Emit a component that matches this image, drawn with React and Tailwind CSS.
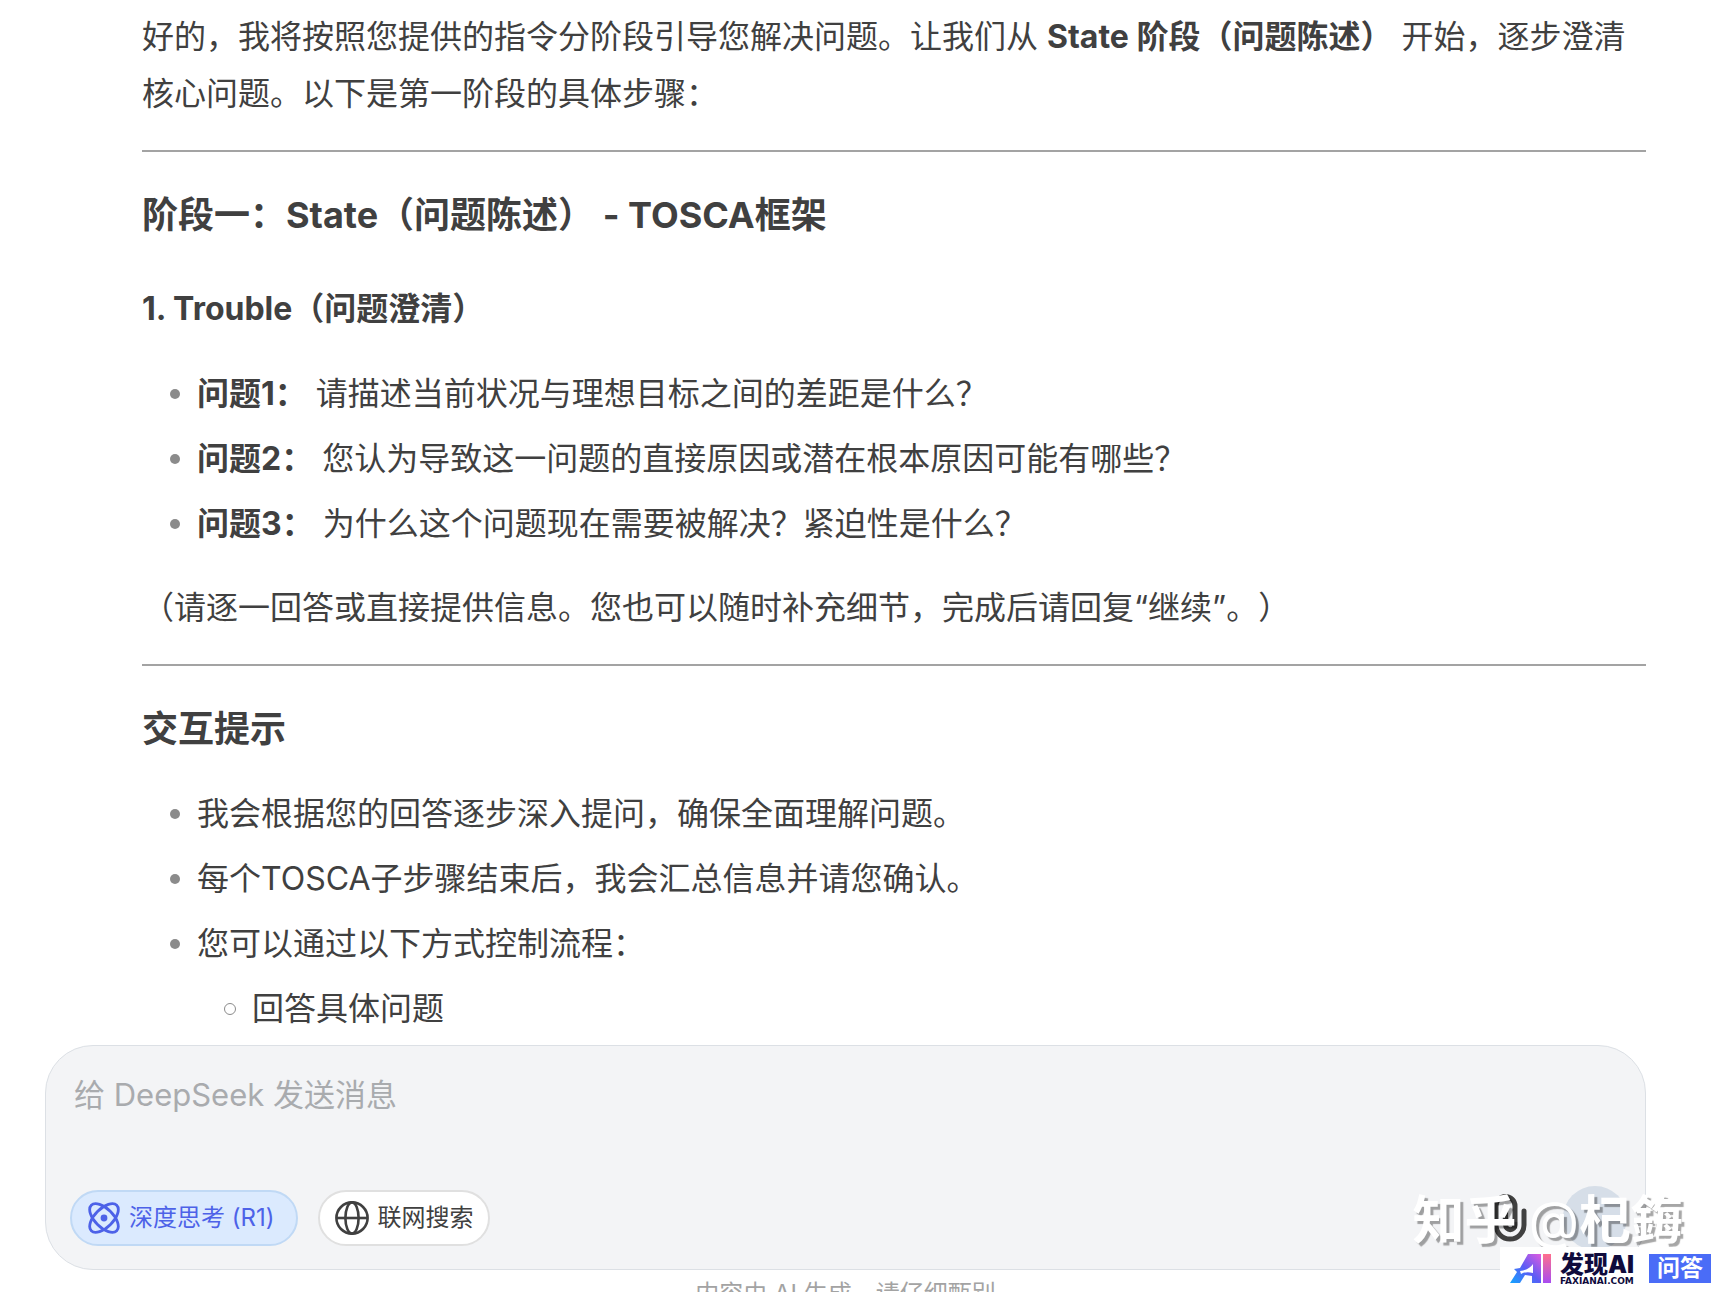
const rule = "h-[2px] border-0 bg-[#a3a3a3]";

function Dot() {
  return <span className="mr-[17px] size-[10px] shrink-0 rounded-full bg-[#8b8b8b]" />;
}

function Item({ children }) {
  return (
    <li className="flex items-center">
      <Dot />
      <span>{children}</span>
    </li>
  );
}

function AtomIcon() {
  return (
    <svg viewBox="0 0 34 34" className="size-[34px]" fill="none" stroke="#4d62e8" strokeWidth="2.8" aria-hidden="true">
      <ellipse cx="17" cy="17" rx="18" ry="9.2" transform="rotate(45 17 17)" />
      <ellipse cx="17" cy="17" rx="18" ry="9.2" transform="rotate(-45 17 17)" />
      <circle cx="17" cy="17" r="3.4" fill="#4d62e8" stroke="none" />
    </svg>
  );
}

function GlobeIcon() {
  return (
    <svg viewBox="0 0 34 34" className="size-[34px]" fill="none" stroke="#404040" strokeWidth="2.6" aria-hidden="true">
      <circle cx="17" cy="17" r="15.6" />
      <ellipse cx="17" cy="17" rx="6.6" ry="15.6" />
      <path d="M1.4 17h31.2" />
    </svg>
  );
}

function ClipIcon() {
  return (
    <svg viewBox="0 0 34 48" className="h-12 w-[34px]" fill="none" stroke="#404040" strokeWidth="5" strokeLinecap="round" aria-hidden="true">
      <path d="M31 17v14a14 14 0 0 1-28 0V12a9.5 9.5 0 0 1 19 0v19a4.7 4.7 0 0 1-9.4 0V17" />
    </svg>
  );
}

function BrandMark() {
  return (
    <svg viewBox="0 0 42 30" className="h-[30px] w-[42px]" aria-hidden="true">
      <defs>
        <linearGradient id="markA" x1="0" y1="1" x2="1" y2="0">
          <stop offset="0" stopColor="#12a5ff" />
          <stop offset="0.5" stopColor="#5b5cf5" />
          <stop offset="1" stopColor="#e05be0" />
        </linearGradient>
        <linearGradient id="markI" x1="0" y1="0" x2="0" y2="1">
          <stop offset="0" stopColor="#ff6f8d" />
          <stop offset="1" stopColor="#a84df0" />
        </linearGradient>
      </defs>
      <path fill="url(#markA)" d="M18 0h13v29h-9v-7l-7-1-5 8H0L7 18 4 15l6-1z" />
      <path fill="#fff" d="M10 17q9-1 13-7v9q-7-2-12 1z" />
      <path fill="url(#markI)" d="M33 0h8v29h-8z" />
    </svg>
  );
}

export default function App() {
  return (
    <div className="relative flex h-screen flex-col overflow-hidden bg-white font-[Inter,'Noto_Sans_CJK_SC',sans-serif] text-[32px] leading-[57px] text-[#404040] [text-spacing-trim:space-all]">
      <main className="min-h-0 flex-1 overflow-hidden pl-[142px] pr-20 pt-2">
        <p>
          好的，我将按照您提供的指令分阶段引导您解决问题。让我们从 <strong>State 阶段（问题陈述）</strong> 开始，逐步澄清核心问题。以下是第一阶段的具体步骤：
        </p>
        <hr className={`mt-7 ${rule}`} />
        <h3 className="mt-[35px] text-[36px] font-bold">阶段一：State（问题陈述） - TOSCA框架</h3>
        <h4 className="mt-9 font-bold">1. Trouble（问题澄清）</h4>
        <ul className="mt-7 flex flex-col gap-2 pl-7">
          <Item><strong>问题1：</strong> 请描述当前状况与理想目标之间的差距是什么？</Item>
          <Item><strong>问题2：</strong> 您认为导致这一问题的直接原因或潜在根本原因可能有哪些？</Item>
          <Item><strong>问题3：</strong> 为什么这个问题现在需要被解决？紧迫性是什么？</Item>
        </ul>
        <p className="mt-[27px]">（请逐一回答或直接提供信息。您也可以随时补充细节，完成后请回复“继续”。）</p>
        <hr className={`mt-7 ${rule}`} />
        <h3 className="mt-[35px] text-[36px] font-bold">交互提示</h3>
        <ul className="mt-[27px] flex flex-col gap-2 pl-7">
          <Item>我会根据您的回答逐步深入提问，确保全面理解问题。</Item>
          <Item>每个TOSCA子步骤结束后，我会汇总信息并请您确认。</Item>
          <Item>您可以通过以下方式控制流程：</Item>
          <li>
            <ul className="pl-[54px]">
              <li className="flex items-center">
                <span className="mr-4 size-3 shrink-0 rounded-full border border-[#8b8b8b]" />
                <span>回答具体问题</span>
              </li>
            </ul>
          </li>
        </ul>
      </main>

      <footer className="shrink-0 pl-[45px] pr-20">
        <form className="rounded-[48px] border border-[#dce0e5] bg-[#f3f4f6] pb-[19px] pl-6 pr-[18px] pt-5" onSubmit={(e) => e.preventDefault()}>
          <textarea
            aria-label="给 DeepSeek 发送消息"
            placeholder="给 DeepSeek 发送消息"
            rows={2}
            className="block h-28 w-full resize-none bg-transparent px-1 text-[31px] leading-[57px] outline-none placeholder:text-[#a9abae]"
          />
          <div className="flex items-center gap-5 pt-2 text-[24px] leading-8">
            <button type="button" className="flex h-14 items-center gap-2 rounded-full border-2 border-[#c0d9f5] bg-[#dbeafe] pl-[15px] pr-[22px] text-[#4d62e8]">
              <AtomIcon />
              <span>深度思考 (R1)</span>
            </button>
            <button type="button" className="flex h-14 items-center gap-2 rounded-full border-2 border-[#e0e0e0] bg-white px-[15px]">
              <GlobeIcon />
              <span>联网搜索</span>
            </button>
            <div className="ml-auto flex items-center gap-9">
              <button type="button" aria-label="添加附件"><ClipIcon /></button>
              <button type="submit" aria-label="发送" className="size-16 rounded-full bg-[#d6dee8]" />
            </div>
          </div>
        </form>
        <p className="h-[22px] pt-2 text-center text-[24px] leading-8 text-[#a3a3a3]">内容由 AI 生成，请仔细甄别</p>
      </footer>

      <div className="absolute bottom-[39px] right-[43px] whitespace-nowrap text-[52px] font-bold leading-[64px] text-white [text-shadow:3px_3px_1px_rgba(0,0,0,0.35)]">
        知乎 <span className="font-normal">@</span>杞鋂
      </div>
      <div className="absolute bottom-0 right-0 flex h-[45px] w-[226px] items-center bg-white pb-[2px] pl-[10px]">
        <BrandMark />
        <div className="ml-2 text-[#0f0b3c]">
          <p className="text-[24px] font-black leading-6">发现AI</p>
          <p className="font-['DejaVu_Sans'] text-[9px] font-bold leading-2">FAXIANAI.COM</p>
        </div>
        <span className="ml-auto mr-[15px] flex h-[29px] w-[62px] items-center justify-center bg-[#4a6cf7] text-[23px] font-bold leading-none text-white">问答</span>
      </div>
    </div>
  );
}
